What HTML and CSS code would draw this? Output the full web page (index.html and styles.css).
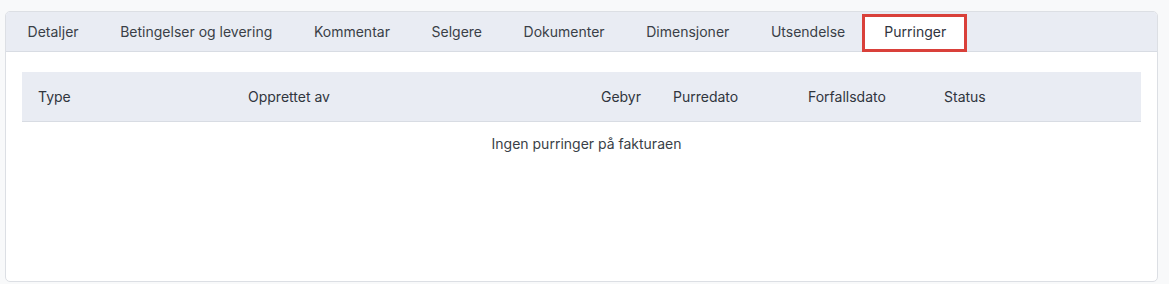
FILE: index.html
```html
<!DOCTYPE html>
<html lang="no">
<head>
<meta charset="utf-8">
<title>Purringer</title>
<link rel="stylesheet" href="styles.css">
</head>
<body>
<div class="page">
  <div class="card">
    <nav class="tabs">
      <div class="tab">Detaljer</div>
      <div class="tab">Betingelser og levering</div>
      <div class="tab">Kommentar</div>
      <div class="tab">Selgere</div>
      <div class="tab">Dokumenter</div>
      <div class="tab">Dimensjoner</div>
      <div class="tab">Utsendelse</div>
      <div class="tab active">Purringer</div>
    </nav>
    <div class="content">
      <table class="grid">
        <colgroup>
          <col class="c-type">
          <col class="c-by">
          <col class="c-fee">
          <col class="c-date">
          <col class="c-due">
          <col class="c-status">
        </colgroup>
        <thead>
          <tr>
            <th>Type</th>
            <th>Opprettet av</th>
            <th class="num">Gebyr</th>
            <th>Purredato</th>
            <th>Forfallsdato</th>
            <th>Status</th>
          </tr>
        </thead>
        <tbody>
          <tr>
            <td colspan="6" class="empty">Ingen purringer på fakturaen</td>
          </tr>
        </tbody>
      </table>
    </div>
  </div>
</div>
</body>
</html>
```
FILE: styles.css
```css
html, body {
  margin: 0;
  padding: 0;
  background: #f8f9fa;
  font-family: Inter, "Noto Sans", sans-serif;
  font-size: 14px;
  color: #343a42;
}

.page {
  padding: 11px 11px 2px 5px;
}

.card {
  height: 271px;
  box-sizing: border-box;
  background: #ffffff;
  border: 1px solid #dcdfe4;
  border-radius: 5px;
  overflow: hidden;
}

.tabs {
  display: flex;
  align-items: flex-end;
  height: 40px;
  box-sizing: border-box;
  background: #e9ecf3;
  border-bottom: 1px solid #d8dce3;
}

.tab {
  height: 39px;
  line-height: 39px;
  padding: 0 20px 0 21.6px;
  white-space: nowrap;
  color: #3a3f47;
}

.tab.active {
  box-sizing: border-box;
  height: 38px;
  line-height: 29px;
  margin-bottom: -1px;
  margin-left: -3px;
  padding: 0 18px 0 19px;
  background: #ffffff;
  border: 3px solid #d9403a;
  color: #2f3440;
}

.content {
  padding: 20px 16px 0 16px;
}

.grid {
  width: 100%;
  border-collapse: collapse;
  table-layout: fixed;
}

.c-type { width: 210px; }
.c-by { width: 345px; }
.c-fee { width: 80px; }
.c-date { width: 135px; }
.c-due { width: 136px; }
.c-status { width: 213px; }

.grid th {
  height: 49px;
  padding: 0 16px;
  text-align: left;
  font-weight: 400;
  color: #30353d;
  background: #e9ecf3;
  border-bottom: 1px solid #d8dce3;
}

.grid th.num {
  text-align: right;
}

.grid td.empty {
  padding: 12px 0 12px 10px;
  line-height: 20px;
  text-align: center;
  color: #3a3f47;
}
```
